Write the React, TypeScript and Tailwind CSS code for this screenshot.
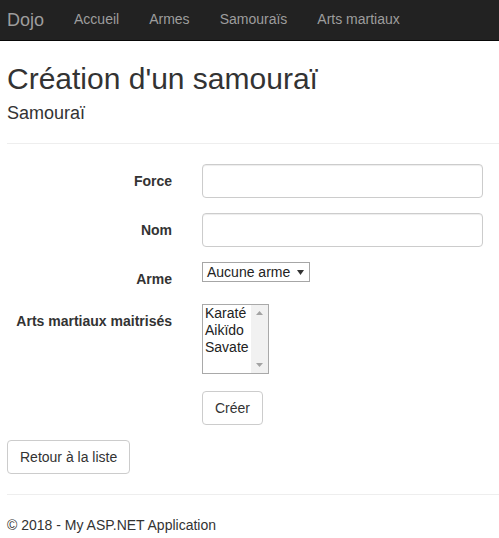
import React from "react";

const NAV_LINKS = ["Accueil", "Armes", "Samouraïs", "Arts martiaux"];
const ARTS = ["Karaté", "Aikïdo", "Savate"];

function Navbar() {
  return (
    <nav className="h-[41px] bg-[#222] border-b border-[#080808] flex items-center pl-[7px]">
      <span className="text-[18px] leading-[20px] text-[#9d9d9d] pr-[15px] -mt-[1px]">Dojo</span>
      {NAV_LINKS.map((l) => (
        <a key={l} href="#" className="px-[15px] text-[14px] leading-[20px] text-[#9d9d9d] -mt-[2px]">
          {l}
        </a>
      ))}
    </nav>
  );
}

function FormRow({ label, children, className = "" }: { label: string; children: React.ReactNode; className?: string }) {
  return (
    <div className={"flex items-start " + className}>
      <label className="w-[165px] shrink-0 text-right font-bold text-[14px] leading-[20px] pt-[7px]">{label}</label>
      <div className="flex-1 pl-[30px] pr-[16px]">{children}</div>
    </div>
  );
}

function TextInput() {
  return (
    <input
      type="text"
      className="block w-full h-[34px] px-[12px] border border-[#ccc] rounded-[4px] bg-white shadow-[inset_0_1px_1px_rgba(0,0,0,0.075)] outline-none"
    />
  );
}

export default function App() {
  return (
    <div className="min-h-[538px] bg-white text-[#333] text-[14px] leading-[20px]" style={{ fontFamily: '"Liberation Sans", Arial, sans-serif' }}>
      <Navbar />
      <div className="pl-[7px]">
        <h2 className="mt-[21px] text-[30px] leading-[33px]">Création d'un samouraï</h2>
        <h4 className="mt-[8px] text-[18px] leading-[20px]">Samouraï</h4>
        <hr className="mt-[20px] border-0 border-t border-[#eee]" />

        <form className="mt-[20px]" onSubmit={(e) => e.preventDefault()}>
          <FormRow label="Force" className="mb-[15px]">
            <TextInput />
          </FormRow>
          <FormRow label="Nom" className="mb-[15px]">
            <TextInput />
          </FormRow>
          <FormRow label="Arme" className="mb-[15px] h-[27px]">
            <div className="inline-flex items-center w-[108px] h-[20px] border border-[#a6a6a6] bg-white pl-[4px] pr-[5px] text-[14px] leading-[18px] text-[#222]">
              <span className="flex-1">Aucune arme</span>
              <svg width="7" height="5" viewBox="0 0 7 5" className="mt-[1px]">
                <path d="M0 0 L7 0 L3.5 5 Z" fill="#333" />
              </svg>
            </div>
          </FormRow>
          <FormRow label="Arts martiaux maitrisés" className="mb-[17px]">
            <div className="flex w-[67px] h-[70px] border border-[#a9a9a9] bg-white">
              <div className="flex-1 pl-[2px] text-[14px] leading-[17px] text-[#222]">
                {ARTS.map((a) => (
                  <div key={a}>{a}</div>
                ))}
              </div>
              <div className="w-[17px] bg-[#f1f1f1] flex flex-col justify-between items-center py-[6px]">
                <svg width="7" height="4" viewBox="0 0 7 4">
                  <path d="M0 4 L7 4 L3.5 0 Z" fill="#a3a3a3" />
                </svg>
                <svg width="7" height="4" viewBox="0 0 7 4">
                  <path d="M0 0 L7 0 L3.5 4 Z" fill="#a3a3a3" />
                </svg>
              </div>
            </div>
          </FormRow>
          <FormRow label="" className="mb-[15px]">
            <button
              type="submit"
              className="h-[34px] px-[12px] border border-[#ccc] rounded-[4px] bg-white text-[14px] leading-[20px] text-[#333]"
            >
              Créer
            </button>
          </FormRow>
        </form>

        <div>
          <a
            href="#"
            className="inline-flex items-center h-[34px] px-[12px] border border-[#ccc] rounded-[4px] bg-white text-[14px] leading-[20px] text-[#333]"
          >
            Retour à la liste
          </a>
        </div>
        <hr className="mt-[20px] border-0 border-t border-[#eee]" />
        <footer className="mt-[20px]">
          <p>© 2018 - My ASP.NET Application</p>
        </footer>
      </div>
    </div>
  );
}
